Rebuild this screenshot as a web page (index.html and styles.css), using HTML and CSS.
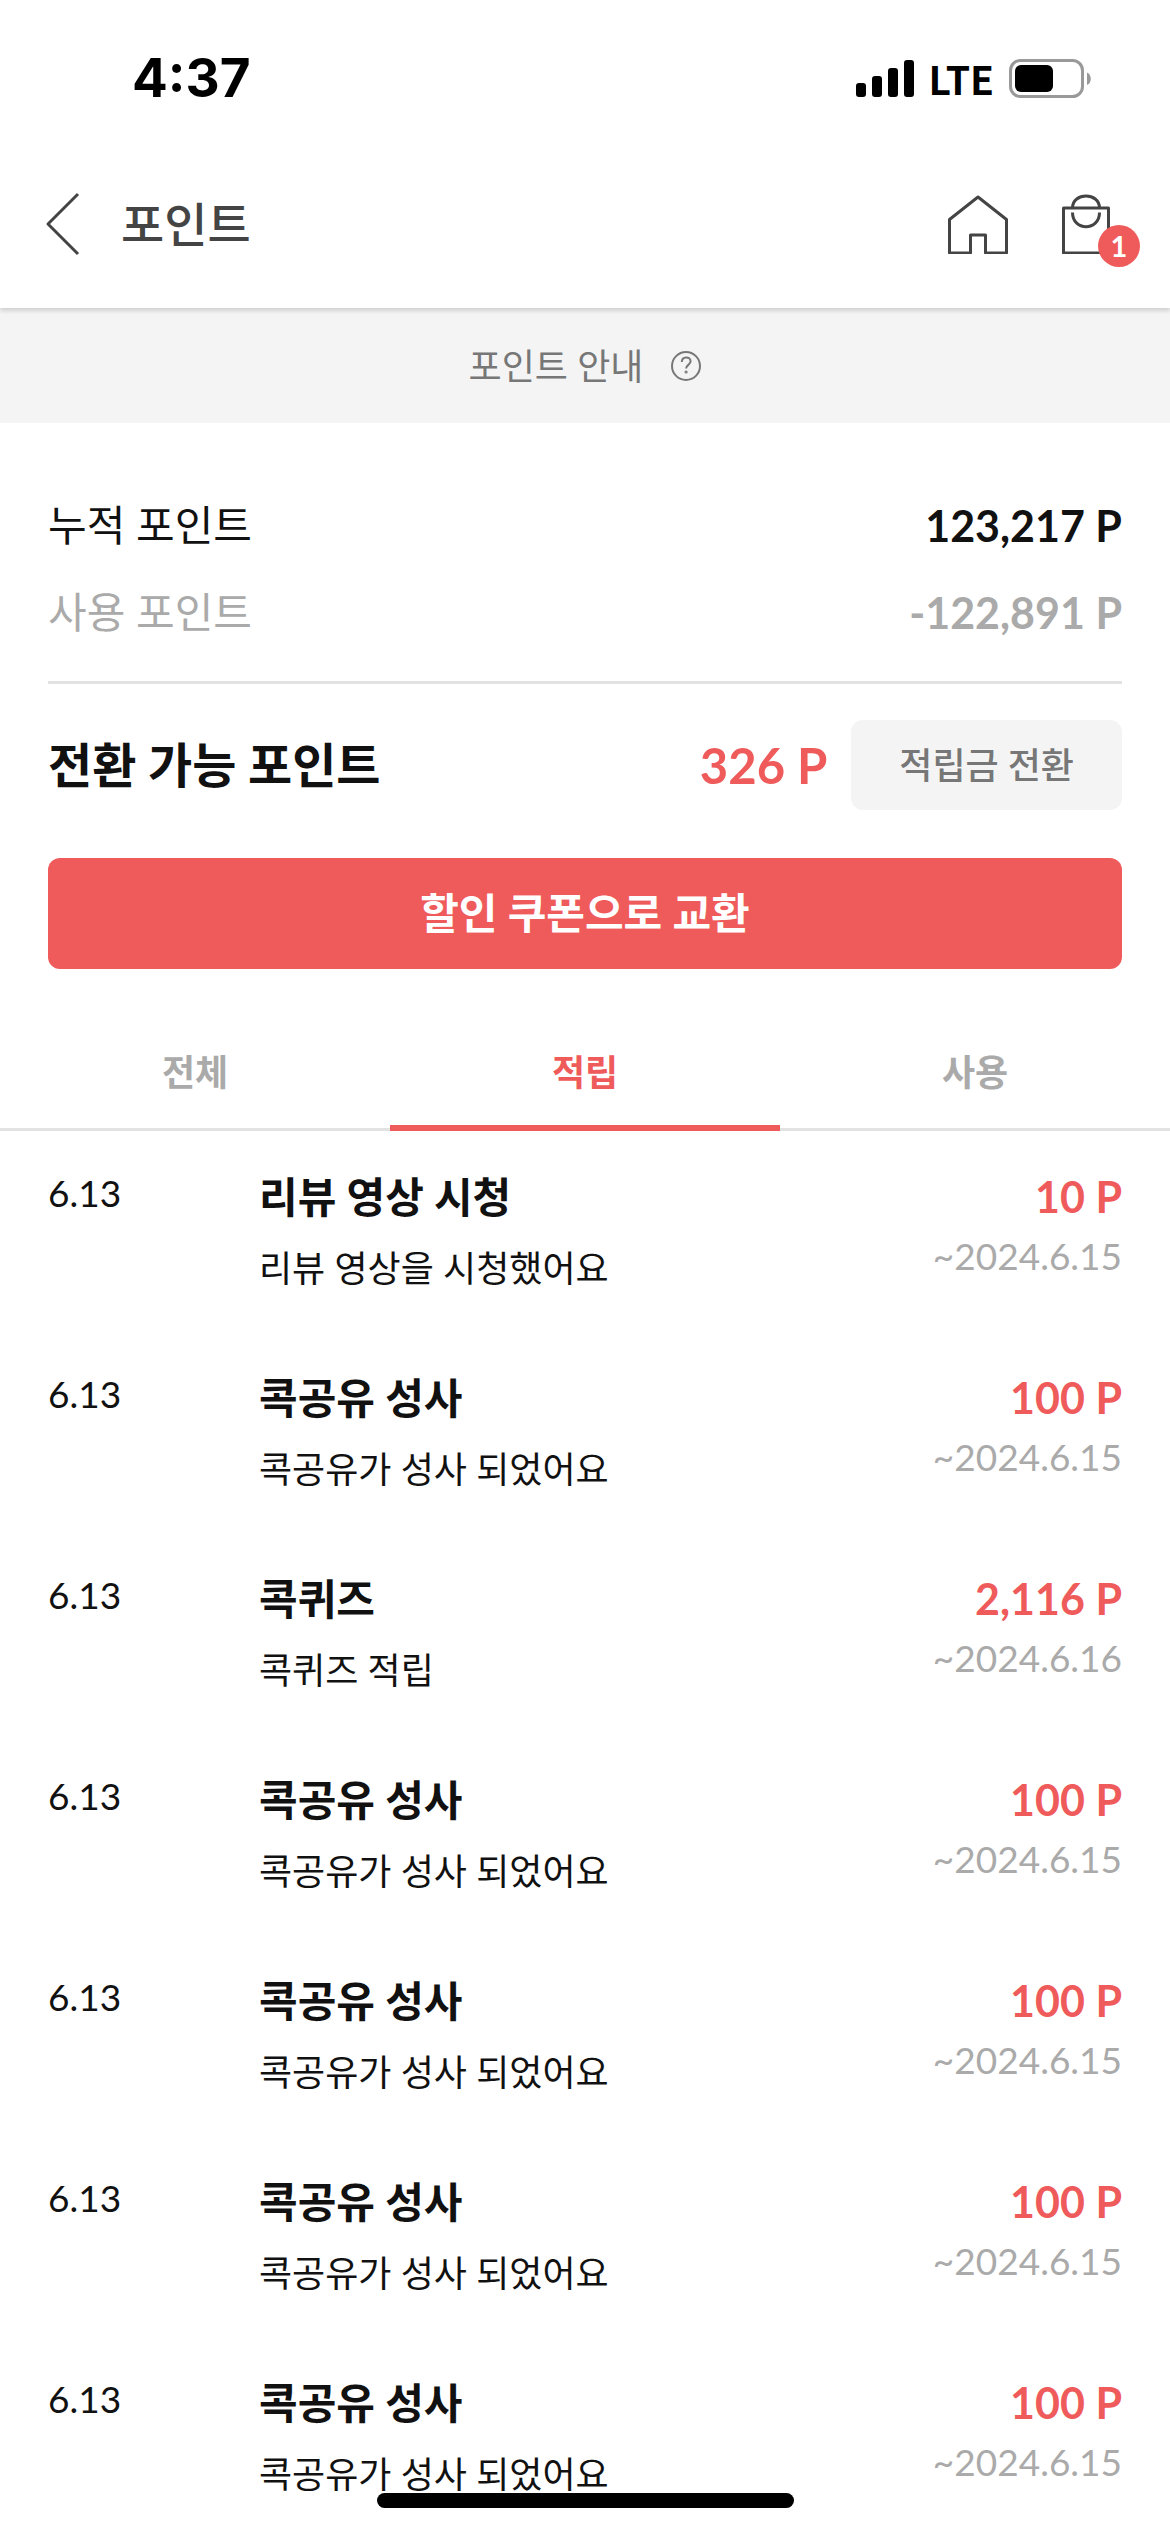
FILE: index.html
```html
<!DOCTYPE html>
<html lang="ko">
<head>
<meta charset="utf-8">
<meta name="viewport" content="width=device-width">
<title>포인트</title>
<link rel="stylesheet" href="styles.css">
</head>
<body>
<div class="status-bar">
  <span class="clock">4:37</span>
  <div class="status-icons">
    <svg class="signal" viewBox="0 0 58 38" aria-hidden="true">
      <rect x="0" y="24" width="10" height="14" rx="3"/>
      <rect x="16" y="17" width="10" height="21" rx="3"/>
      <rect x="32" y="9" width="10" height="29" rx="3"/>
      <rect x="48" y="1" width="10" height="37" rx="3"/>
    </svg>
    <span class="network">LTE</span>
    <svg class="battery" viewBox="0 0 82 39" aria-hidden="true">
      <rect x="1.5" y="1.5" width="72" height="36" rx="10" fill="none" stroke="#999" stroke-width="3"/>
      <rect x="6" y="6" width="38" height="27" rx="6"/>
      <path d="M78 13.500c5 1.500 5 11 0 12.500z" fill="#999"/>
    </svg>
  </div>
</div>

<header class="header">
  <button class="icon-button back" type="button" aria-label="뒤로">
    <svg width="36" height="64" viewBox="0 0 36 64"><path d="M33 2 3 32l30 30"/></svg>
  </button>
  <h1 class="title">포인트</h1>
  <a class="icon-button" href="#" aria-label="홈">
    <svg width="60" height="60" viewBox="0 0 60 60"><path d="M30 3 58.500 25.500V59H37.500V41H22.500V59H1.500V25.500z"/></svg>
  </a>
  <a class="icon-button cart" href="#" aria-label="장바구니">
    <svg width="48" height="60" viewBox="0 0 48 60"><path d="M1.500 14h45v45h-45zM10.500 14c0-16 27-16 27 0M10.500 18.500c0 19 27 19 27 0"/></svg>
    <span class="badge">1</span>
  </a>
</header>

<main>
  <a class="guide" href="#">
    <span>포인트 안내</span>
    <svg width="30" height="30" viewBox="0 0 30 30" aria-hidden="true"><circle cx="15" cy="15" r="14"/><path d="M10.800 11c0-6 8.800-6 8.800-.7 0 3.600-4.500 3.600-4.500 7.200"/><circle cx="15.100" cy="21" r=".6"/></svg>
  </a>

  <section class="summary">
    <div class="line">
      <span>누적 포인트</span>
      <strong class="total">123,217 P</strong>
    </div>
    <div class="line used">
      <span>사용 포인트</span>
      <strong class="total">-122,891 P</strong>
    </div>
    <div class="available">
      <h2 class="available-label">전환 가능 포인트</h2>
      <strong class="available-amount">326 P</strong>
      <button class="convert" type="button">적립금 전환</button>
    </div>
    <button class="exchange" type="button">할인 쿠폰으로 교환</button>
  </section>

  <nav class="tabs">
    <a class="tab" href="#">전체</a>
    <a class="tab active" href="#" aria-current="page">적립</a>
    <a class="tab" href="#">사용</a>
  </nav>

  <ul class="history">
    <li class="entry">
      <span class="date">6.13</span>
      <div class="detail"><h3 class="name">리뷰 영상 시청</h3><p class="desc">리뷰 영상을 시청했어요</p></div>
      <div class="points"><strong class="amount">10 P</strong><span class="expires">~2024.6.15</span></div>
    </li>
    <li class="entry">
      <span class="date">6.13</span>
      <div class="detail"><h3 class="name">콕공유 성사</h3><p class="desc">콕공유가 성사 되었어요</p></div>
      <div class="points"><strong class="amount">100 P</strong><span class="expires">~2024.6.15</span></div>
    </li>
    <li class="entry">
      <span class="date">6.13</span>
      <div class="detail"><h3 class="name">콕퀴즈</h3><p class="desc">콕퀴즈 적립</p></div>
      <div class="points"><strong class="amount">2,116 P</strong><span class="expires">~2024.6.16</span></div>
    </li>
    <li class="entry">
      <span class="date">6.13</span>
      <div class="detail"><h3 class="name">콕공유 성사</h3><p class="desc">콕공유가 성사 되었어요</p></div>
      <div class="points"><strong class="amount">100 P</strong><span class="expires">~2024.6.15</span></div>
    </li>
    <li class="entry">
      <span class="date">6.13</span>
      <div class="detail"><h3 class="name">콕공유 성사</h3><p class="desc">콕공유가 성사 되었어요</p></div>
      <div class="points"><strong class="amount">100 P</strong><span class="expires">~2024.6.15</span></div>
    </li>
    <li class="entry">
      <span class="date">6.13</span>
      <div class="detail"><h3 class="name">콕공유 성사</h3><p class="desc">콕공유가 성사 되었어요</p></div>
      <div class="points"><strong class="amount">100 P</strong><span class="expires">~2024.6.15</span></div>
    </li>
    <li class="entry">
      <span class="date">6.13</span>
      <div class="detail"><h3 class="name">콕공유 성사</h3><p class="desc">콕공유가 성사 되었어요</p></div>
      <div class="points"><strong class="amount">100 P</strong><span class="expires">~2024.6.15</span></div>
    </li>
  </ul>
</main>
<div class="home-indicator"></div>
</body>
</html>
```

FILE: styles.css
```css
* {
  box-sizing: border-box;
  margin: 0;
  padding: 0;
}

body {
  background: #fff;
  color: #111;
  font-family: Lato, "Noto Sans CJK KR", sans-serif;
  font-size: 36px;
}

a {
  color: inherit;
  text-decoration: none;
}

button {
  border: 0;
  font-family: inherit;
  cursor: pointer;
}

/* Status bar */
.status-bar {
  display: flex;
  align-items: center;
  justify-content: space-between;
  height: 140px;
  padding: 16px 79px 0 132px;
  color: #000;
}

.clock {
  font: 700 53px/60px Inter, sans-serif;
}

.status-icons {
  display: flex;
  align-items: center;
}

.signal {
  width: 58px;
  height: 38px;
  margin-right: 14px;
}

.network {
  margin-right: 15px;
  font: 700 39px/48px "Noto Sans CJK KR", sans-serif;
}

.battery {
  width: 82px;
  height: 39px;
}

/* Header */
.header {
  position: relative;
  z-index: 1;
  display: flex;
  align-items: center;
  height: 168px;
  padding: 0 60px 0 45px;
  background: #fff;
  box-shadow: 0 3px 4px rgba(0, 0, 0, 0.14);
}

.icon-button {
  display: flex;
  background: none;
}

.icon-button svg {
  fill: none;
  stroke: #444;
  stroke-width: 3;
  stroke-linejoin: round;
}

.title {
  flex: 1;
  margin-left: 40px;
  color: #444;
  font-size: 47px;
  font-weight: 500;
  line-height: 72px;
}

.cart {
  position: relative;
  margin-left: 54px;
}

.badge {
  position: absolute;
  top: 31px;
  left: 36px;
  width: 42px;
  height: 42px;
  border-radius: 50%;
  background: #ef5b5b;
  color: #fff;
  font-size: 29px;
  font-weight: 700;
  line-height: 42px;
  text-align: center;
}

/* Guide strip */
.guide {
  display: flex;
  align-items: center;
  justify-content: center;
  gap: 28px;
  height: 115px;
  background: #f4f4f4;
  color: #777;
  line-height: 54px;
}

.guide svg {
  fill: none;
  stroke: #777;
  stroke-width: 2;
}

/* Point summary */
.summary {
  padding: 69px 48px 0;
}

.line {
  display: flex;
  justify-content: space-between;
  margin-bottom: 20px;
  font-size: 42px;
  line-height: 67px;
}

.total {
  font-size: 43px;
}

.used {
  margin-bottom: 35px;
  color: #aaa;
}

.available {
  display: flex;
  align-items: center;
  padding: 36px 0 48px;
  border-top: 3px solid #e2e2e2;
}

.available-label {
  flex: 1;
  font-size: 48px;
  line-height: 72px;
}

.available-amount {
  margin-right: 24px;
  color: #ef5b5b;
  font-size: 49px;
  line-height: 72px;
}

.convert {
  padding: 0 48px;
  border-radius: 12px;
  background: #f4f4f4;
  color: #777;
  font-size: 36px;
  font-weight: 500;
  line-height: 90px;
}

.exchange {
  width: 100%;
  border-radius: 12px;
  background: #ef5b5b;
  color: #fff;
  font-size: 42px;
  font-weight: 700;
  line-height: 111px;
}

/* Tabs */
.tabs {
  display: flex;
  margin-top: 50px;
  box-shadow: inset 0 -3px #e2e2e2;
}

.tab {
  flex: 1;
  border-bottom: 6px solid transparent;
  color: #aaa;
  font-weight: 700;
  line-height: 106px;
  text-align: center;
}

.active {
  border-color: #ef5b5b;
  color: #ef5b5b;
}

/* History list */
.history {
  padding: 0 48px;
  list-style: none;
}

.entry {
  display: flex;
  padding: 36px 0;
}

.entry:last-child {
  padding-bottom: 0;
}

.date {
  width: 211px;
  font-size: 37px;
  line-height: 52px;
}

.detail {
  flex: 1;
}

.name {
  margin-bottom: 14px;
  font-size: 42px;
  line-height: 60px;
}

.desc {
  font-size: 36px;
  line-height: 55px;
}

.points {
  display: flex;
  flex-direction: column;
  text-align: right;
}

.amount {
  color: #ef5b5b;
  font-size: 43px;
  line-height: 60px;
}

.expires {
  color: #aaa;
  font-size: 37px;
  line-height: 58px;
}

.home-indicator {
  position: fixed;
  bottom: 24px;
  left: 50%;
  width: 417px;
  height: 15px;
  margin-left: -208px;
  border-radius: 8px;
  background: #000;
}
```
